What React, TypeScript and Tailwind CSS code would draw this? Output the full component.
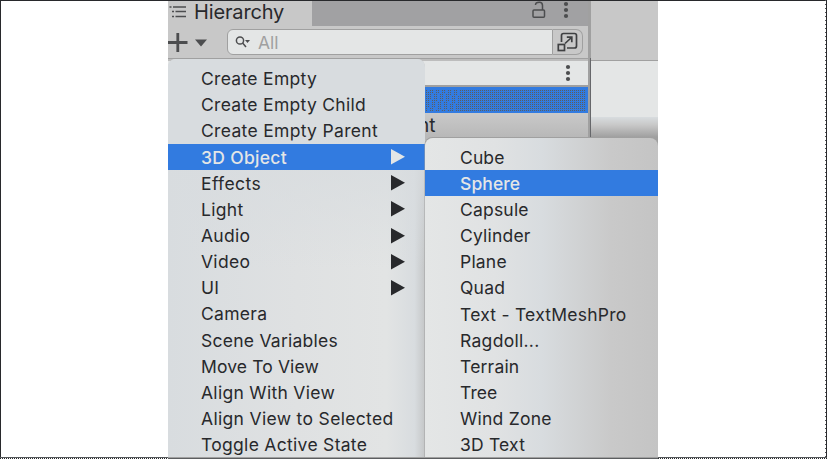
import React from "react";

type Item = { label: string; tracking?: string; arrow?: boolean; active?: boolean };

const mainItems: Item[] = [
  { label: "Create Empty" },
  { label: "Create Empty Child" },
  { label: "Create Empty Parent", tracking: "tracking-[0.32px]" },
  { label: "3D Object", arrow: true, active: true },
  { label: "Effects", tracking: "tracking-[0.4px]", arrow: true },
  { label: "Light", arrow: true },
  { label: "Audio", arrow: true },
  { label: "Video", arrow: true },
  { label: "UI", arrow: true },
  { label: "Camera" },
  { label: "Scene Variables", tracking: "tracking-[0.25px]" },
  { label: "Move To View", tracking: "tracking-[0.12px]" },
  { label: "Align With View" },
  { label: "Align View to Selected", tracking: "tracking-[0.33px]" },
  { label: "Toggle Active State" },
];

const subItems: Item[] = [
  { label: "Cube", tracking: "tracking-[0.1px]" },
  { label: "Sphere", tracking: "tracking-[0.1px]", active: true },
  { label: "Capsule", tracking: "tracking-[0.2px]" },
  { label: "Cylinder", tracking: "tracking-[0.2px]" },
  { label: "Plane", tracking: "tracking-[0.2px]" },
  { label: "Quad", tracking: "tracking-[0.2px]" },
  { label: "Text - TextMeshPro", tracking: "tracking-[0.24px]" },
  { label: "Ragdoll...", tracking: "tracking-[0.3px]" },
  { label: "Terrain", tracking: "tracking-[0.2px]" },
  { label: "Tree", tracking: "tracking-[0.1px]" },
  { label: "Wind Zone", tracking: "tracking-[0.25px]" },
  { label: "3D Text", tracking: "tracking-[0.2px]" },
];

function MenuRow({ item, pad }: { item: Item; pad: string }) {
  return (
    <div
      className={`flex h-[26.17px] shrink-0 items-center justify-between whitespace-nowrap pr-5 text-[17.5px] leading-[26px] ${pad} ${
        item.tracking ?? "tracking-[0.3px]"
      } ${item.active ? "bg-[#327be0] font-medium text-[#e4e6e6]" : "text-[#28292c]"}`}
    >
      <span className="pt-px">{item.label}</span>
      {item.arrow && (
        <svg width="14" height="16" viewBox="0 0 14 16" fill="currentColor">
          <path d="M0 0 14 7.8 0 15.6Z" />
        </svg>
      )}
    </div>
  );
}

function Kebab({ className }: { className: string }) {
  return (
    <svg width="6" height="18" viewBox="0 0 6 18" className={className} fill="#4c4d4f">
      <circle cx="3" cy="3" r="2.1" />
      <circle cx="3" cy="9" r="2.1" />
      <circle cx="3" cy="15" r="2.1" />
    </svg>
  );
}

function HierarchyPanel() {
  return (
    <div className="flex w-[420px] shrink-0 flex-col bg-[#c8c8c8]">
      <div className="flex h-[25px] shrink-0">
        <div className="flex w-[144px] items-center">
          <svg width="20" height="18" viewBox="0 0 20 18" className="mb-1 shrink-0" fill="none" stroke="#4c4d4f" strokeWidth="1.6">
            <path d="M1.500 4h2M5 4h13M4 8.500h2M7.500 8.500h10.500M4 13.500h2M7.500 13.500h10.500" />
          </svg>
          <span className="mb-[3px] ml-[6px] text-[20px] leading-[24px] tracking-[-0.15px] text-[#28292c]">Hierarchy</span>
        </div>
        <div className="flex flex-1 bg-[#a1a1a3]">
          <svg width="14" height="18" viewBox="0 0 14 18" className="ml-[220px] shrink-0" fill="none" stroke="#4c4d4f" strokeWidth="1.5">
            <rect x="1" y="9" width="11.5" height="7.2" rx="1" />
            <path d="M10.500 9V4.500a3.200 3.200 0 0 0-3.200-3.200C5.200 1.300 3.500 2.300 3.500 4" />
          </svg>
          <Kebab className="ml-[17px] shrink-0" />
        </div>
      </div>
      <div className="flex h-[33px] shrink-0 items-start border-b border-[#a0a0a0] pt-[3px]">
        <svg width="40" height="24" viewBox="0 0 40 24" className="mr-[19px] shrink-0">
          <path d="M0 13.500h19.500M9.800 4v19" stroke="#4c4d4f" strokeWidth="2.800" />
          <path d="M27 10.500h12l-6 7z" fill="#4c4d4f" />
        </svg>
        <div className="flex h-[26px] w-[326px] shrink-0 items-center rounded-l-[6px] border-[1.5px] border-[#a0a0a0] bg-[#e4e6e6] pl-[7px]">
          <svg width="16" height="14" viewBox="0 0 16 14" fill="none" stroke="#4c4d4f" strokeWidth="1.5">
            <circle cx="5" cy="5.500" r="3.600" />
            <path d="m7.600 8 3.400 4" />
            <path d="M10 5h5l-2.500 3z" fill="#4c4d4f" stroke="none" />
          </svg>
          <span className="ml-[7px] pt-px text-[17.5px] leading-[20px] text-[#a0a0a0]">All</span>
        </div>
        <div className="flex h-[26px] w-[30px] shrink-0 items-center justify-center rounded-r-[7px] border-[1.5px] border-l-0 border-[#a0a0a0]">
          <svg width="21" height="20" viewBox="0 0 21 20" fill="none" stroke="#3f4042" strokeWidth="1.700">
            <path d="M4.500 10V3.500a2 2 0 0 1 2-2h11a2 2 0 0 1 2 2v10.500a2 2 0 0 1-2 2H10" />
            <rect x="1.300" y="12.500" width="6.200" height="6" />
            <path d="m8 11.500 6.500-6M9.800 5.200h5v5" />
          </svg>
        </div>
      </div>
      <div className="flex h-[28px] shrink-0 items-center border-y-2 border-t-[#bdbdbd] border-b-[#a0a0a0] bg-[#e4e6e6]">
        <Kebab className="ml-[397px]" />
      </div>
      <div className="flex h-[26px] shrink-0 border-y border-r-2 border-[#327be0] border-t-[3px] bg-[#327be0] bg-[conic-gradient(#5c5e60_25%,transparent_0)] bg-[length:2px_2px] bg-[position:1px_0px] pl-[259px]">
        <div className="w-[32px] bg-[repeating-linear-gradient(105deg,#327be0_0_2px,transparent_2px_6px)]" />
      </div>
      <div className="flex h-[346px] shrink-0 items-start bg-[linear-gradient(#c9c9c9_0px,#b8b8b8_24px)] pl-[250px]">
        <span className="text-[19px] leading-[25px] text-[#28292c]">nt</span>
      </div>
    </div>
  );
}

export default function App() {
  return (
    <div className="relative flex h-[459px] w-[827px] justify-start overflow-hidden bg-white pl-[168px] pt-px font-['Inter','Liberation_Sans',sans-serif]">
      <HierarchyPanel />
      <div className="flex w-[3px] shrink-0 flex-col">
        <div className="h-[57px] bg-[#a0a0a0]" />
        <div className="flex-1 border-r border-[#66676a] bg-[#a0a0a0]" />
      </div>
      <div className="flex w-[67px] shrink-0 flex-col">
        <div className="h-[60px] shrink-0 border-b border-[#a0a0a0] bg-[#c8c8c8]" />
        <div className="h-[56px] shrink-0 bg-[#e4e6e6]" />
        <div className="h-[30px] shrink-0 bg-[linear-gradient(#d8dcdf,#c8c8c8_8px,#a0a0a0_20px)]" />
      </div>

      <div className="absolute left-[168px] top-[59px] flex h-[400px] w-[257px] flex-col overflow-hidden rounded-t-[8px] bg-[linear-gradient(90deg,#d8dcdf,#dfe1e2_50%,#e2e4e4_85%,#d8dcdf_96%,#c4c6c7)] pt-[6.5px]">
        <div className="absolute inset-x-0 top-0 h-[210px] bg-[linear-gradient(#d8dcdf_38%,transparent)]" />
        <div className="relative flex flex-col">
          {mainItems.map((item) => (
            <MenuRow key={item.label} item={item} pad="pl-[33px]" />
          ))}
        </div>
      </div>

      <div className="absolute left-[425px] top-[138px] flex h-[321px] w-[233px] flex-col overflow-hidden rounded-t-[8px] bg-[linear-gradient(90deg,#e4e6e6_0%,#e0e2e3_30%,#d8dcdf_50%,#c9c9c9_80%,#c4c4c4)] pt-[6px] shadow-[-0.5px_-1px_0_0_#a0a0a0]">
        {subItems.map((item) => (
          <MenuRow key={item.label} item={item} pad="pl-[35px]" />
        ))}
      </div>

      <div className="pointer-events-none absolute inset-0 border border-b-0 border-[#28292c]" />
      <div className="pointer-events-none absolute inset-y-0 right-px w-px bg-[repeating-linear-gradient(#55565a_0_1px,#ffffff_1px_4px)]" />
      <div className="pointer-events-none absolute inset-x-0 bottom-0 h-[2px] border-t border-[#55585a] bg-[repeating-linear-gradient(90deg,#28292c_0_1px,#ffffff_1px_2px)]" />
      <div className="pointer-events-none absolute bottom-0 left-[168px] h-[2px] w-[490px] border-t border-[#a0a0a0] bg-[#5c5e60]" />
    </div>
  );
}
